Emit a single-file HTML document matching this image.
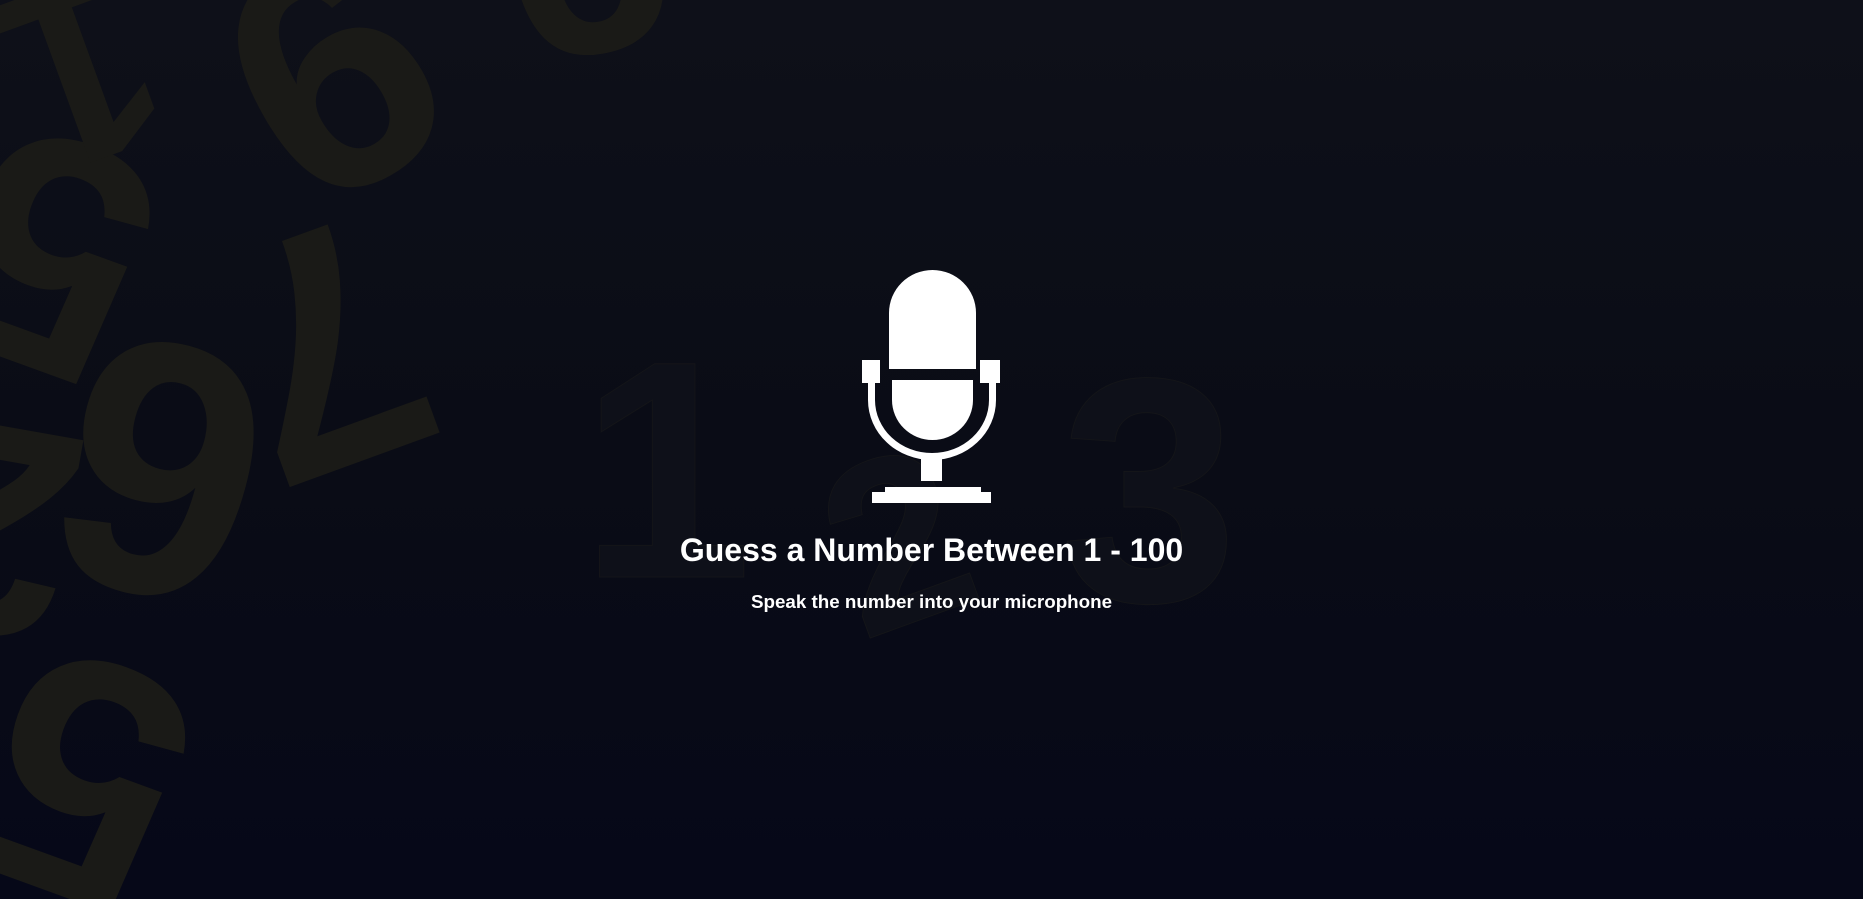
<!DOCTYPE html>
<html><head><meta charset="utf-8"><style>
html,body{margin:0;padding:0;width:1863px;height:899px;overflow:hidden}
body{background:linear-gradient(180deg,#0e1019 0%,#0a0c16 50%,#060818 100%);font-family:"Liberation Sans",sans-serif;position:relative}
#w{position:absolute;left:0;top:0;width:1863px;height:899px;overflow:hidden}
.d{position:absolute;font-family:"Liberation Sans",sans-serif;font-weight:bold;color:#1a1a17;line-height:1}
.f{color:#0e1019;-webkit-text-stroke:1px #141519}
h1{position:absolute;left:0;width:1863px;top:532px;margin:0;text-align:center;color:#fff;font-size:32px;font-weight:bold}
p{position:absolute;left:0;width:1863px;top:591px;margin:0;text-align:center;color:#fff;font-size:18.8px;font-weight:bold}
</style></head><body><div id="w">
<div class="d" style="left:240px;top:-90px;font-size:330px;transform:rotate(150deg)">9</div>
<div class="d" style="left:500px;top:-200px;font-size:300px;transform:rotate(170deg)">9</div>
<div class="d" style="left:230px;top:180px;font-size:340px;transform:rotate(160deg)">7</div>
<div class="d" style="left:60px;top:290px;font-size:360px;transform:rotate(195deg)">6</div>
<div class="d" style="left:-40px;top:90px;font-size:330px;transform:rotate(200deg)">5</div>
<div class="d" style="left:10px;top:-60px;font-size:260px;transform:rotate(160deg)">1</div>
<div class="d" style="left:-90px;top:380px;font-size:300px;transform:rotate(190deg)">2</div>
<div class="d" style="left:-10px;top:610px;font-size:340px;transform:rotate(200deg)">5</div>
<div class="d f" style="left:580px;top:315px;font-size:310px">1</div>
<div class="d f" style="left:1060px;top:330px;font-size:320px">3</div>
<div class="d f" style="left:830px;top:420px;font-size:240px;transform:rotate(-20deg)">2</div>
<svg style="position:absolute;left:0;top:0" width="1863" height="899">
<g fill="#fff">
<path d="M889 369 V313 A43.5 43 0 0 1 976 313 V369 Z"/>
<path d="M892 380 H973 V400 A40.5 40 0 0 1 892 400 Z"/>
<rect x="862" y="360" width="18" height="23"/>
<rect x="980" y="360" width="20" height="23"/>
<path d="M868 383 H875 V400 A57 53 0 0 0 989 400 V383 H996 V400 A64 60 0 0 1 868 400 Z"/>
<rect x="921" y="456" width="21" height="25"/>
<rect x="885" y="487" width="96" height="6"/>
<rect x="872" y="492" width="119" height="11"/>
</g></svg>
<h1>Guess a Number Between 1 - 100</h1>
<p>Speak the number into your microphone</p>
</div></body></html>
